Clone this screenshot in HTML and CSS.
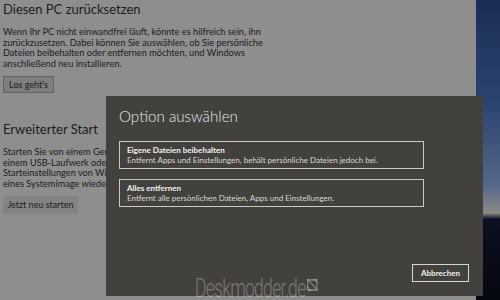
FILE: index.html
```html
<!DOCTYPE html>
<html lang="de">
<head>
    <meta charset="UTF-8">
    <title>Diesen PC zurücksetzen</title>
    <link rel="stylesheet" href="styles.css">
</head>
<body>
    <div class="desktop">
        <div class="settings">
            <section class="block">
                <h2>Diesen PC zurücksetzen</h2>
                <p>Wenn Ihr PC nicht einwandfrei läuft, könnte es hilfreich sein, ihn<br>zurückzusetzen. Dabei können Sie auswählen, ob Sie persönliche<br>Dateien beibehalten oder entfernen möchten, und Windows<br>anschließend neu installieren.</p>
                <button class="btn btn-outline">Los geht's</button>
            </section>
            <section class="block">
                <h2>Erweiterter Start</h2>
                <p>Starten Sie von einem Gerät oder Datenträger (z. B.<br>einem USB-Laufwerk oder einer DVD), ändern Sie die<br>Starteinstellungen von Windows, oder stellen Sie Windows anhand<br>eines Systemimage wieder her.</p>
                <button class="btn btn-flat">Jetzt neu starten</button>
            </section>
        </div>
        <div class="wallpaper"></div>

        <!-- Dialog lies over the settings page -->
        <div class="dialog">
            <h1>Option auswählen</h1>
            <div class="option">
                <strong>Eigene Dateien beibehalten</strong>
                <span>Entfernt Apps und Einstellungen, behält persönliche Dateien jedoch bei.</span>
            </div>
            <div class="option">
                <strong>Alles entfernen</strong>
                <span>Entfernt alle persönlichen Dateien, Apps und Einstellungen.</span>
            </div>
            <div class="dialog-buttons">
                <button class="btn-cancel">Abbrechen</button>
            </div>
        </div>

        <div class="watermark">Deskmodder.de<span class="mark"></span></div>
    </div>
</body>
</html>
```

FILE: styles.css
```css
body {
    margin: 0;
    font-family: Lato, "Noto Sans", sans-serif;
    background-color: #8e8e8e;
}

.desktop {
    position: relative;
    display: flex;
    width: 500px;
    height: 300px;
    overflow: hidden;
}

.settings {
    width: 476px;
    background-color: #8e8e8e;
    padding: 1px 0 0 3px;
    box-sizing: border-box;
    color: #1c1c1c;
}

.wallpaper {
    flex: 1;
    background: linear-gradient(#1b2d55 0%, #2c4470 35%, #56688a 62%, #8b8a84 71%, #0c1020 73%, #060810 100%);
}

.block {
    margin-bottom: 28px;
}

h2 {
    font-weight: normal;
    font-size: 13px;
    line-height: 16px;
    margin: 0 0 10px;
}

p {
    font-size: 9.2px;
    line-height: 10.7px;
    white-space: nowrap;
    margin: 0 0 6px;
}

.btn {
    display: block;
    font-family: inherit;
    font-size: 9px;
    color: #1c1c1c;
    padding: 0;
    white-space: nowrap;
}

.btn-outline {
    background-color: #7e7e7e;
    border: 1px solid #636363;
    width: 51px;
    height: 17px;
}

.btn-flat {
    background-color: #838383;
    border: none;
    width: 75px;
    height: 18px;
}

.dialog {
    position: absolute;
    left: 106px;
    top: 96px;
    width: 377px;
    height: 200px;
    background-color: #43413d;
    color: #e8e8e8;
    padding: 11px 14px 14px 13px;
    box-sizing: border-box;
    display: flex;
    flex-direction: column;
}

.dialog h1 {
    font-weight: 300;
    font-size: 15.2px;
    margin: 0 0 15px;
    line-height: 19px;
}

.option {
    width: 305px;
    height: 28px;
    box-sizing: border-box;
    border: 1px solid #c9c9c7;
    padding: 3px 7px;
    margin-bottom: 10px;
    display: flex;
    flex-direction: column;
    font-size: 8px;
    line-height: 10px;
}

.option strong {
    font-weight: bold;
    color: #f2f2f2;
}

.option span {
    color: #d8d8d6;
}

.dialog-buttons {
    margin-top: auto;
    display: flex;
    justify-content: flex-end;
}

.btn-cancel {
    font-family: inherit;
    font-size: 8px;
    font-weight: bold;
    color: #f2f2f2;
    background: transparent;
    border: 1px solid #d6d6d6;
    width: 57px;
    height: 18px;
    padding: 0;
}

.watermark {
    position: absolute;
    left: 195px;
    top: 274px;
    font-family: Roboto, sans-serif;
    font-weight: 300;
    font-size: 25px;
    letter-spacing: -1px;
    color: rgba(255, 255, 255, 0.3);
    display: flex;
    align-items: flex-start;
    transform: scaleX(0.7);
    transform-origin: left top;
}

.mark {
    width: 15px;
    height: 12px;
    border: 2px solid rgba(255, 255, 255, 0.3);
    box-sizing: border-box;
    margin-top: 5px;
    margin-left: 2px;
    background: linear-gradient(to top right, transparent 45%, rgba(255, 255, 255, 0.3) 45%, rgba(255, 255, 255, 0.3) 58%, transparent 58%);
}
```
